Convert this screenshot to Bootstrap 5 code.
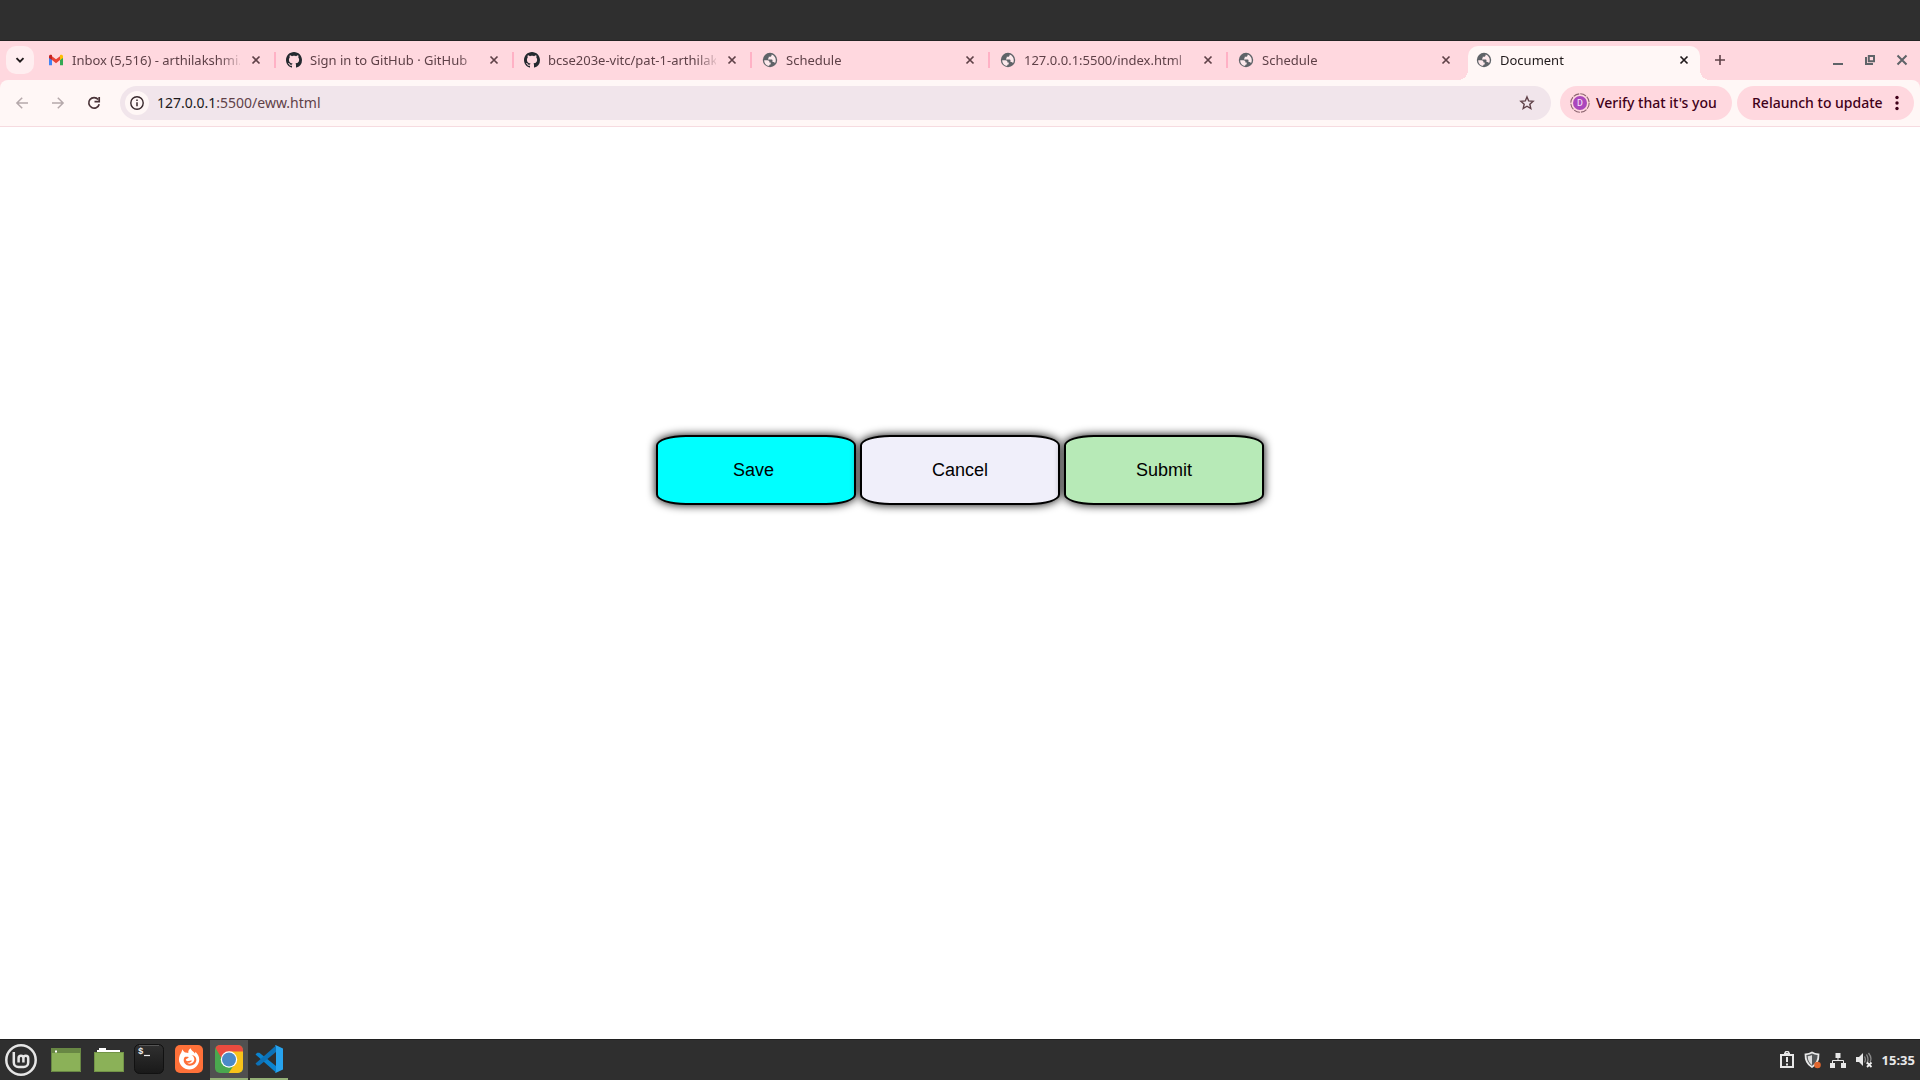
<!DOCTYPE html>
<html lang="en">
<head>
<meta charset="utf-8">
<meta name="viewport" content="width=device-width, initial-scale=1">
<title>Document</title>
<link href="https://cdn.jsdelivr.net/npm/bootstrap@5.3.0/dist/css/bootstrap.min.css" rel="stylesheet">
<style>
  body { font-family: "Noto Sans", "Open Sans", sans-serif; color: #201a1b; background: #fff; }
  svg { display: block; flex: none; }
  button { border: 0; background: none; padding: 0; color: inherit; }
  .top-panel { height: 41px; background: #2f2f2f; border-bottom: 1px solid #232323; }
  .tab-strip { height: 39px; background: #ffd8df; padding: 5px 10px 0 6px; }
  .tab-search { width: 28px; height: 28px; border-radius: 10px; background: #ffeef0; margin-right: 4px; }
  .tab-item { width: 238px; height: 28px; padding: 0 10px 0 10px; position: relative; font-size: 13px; line-height: 20px; color: #5f4148; }
  .tab-item a { color: inherit; }
  .tab-item .divider { position: absolute; right: 0; top: 6px; width: 2px; height: 16px; background: #ffb1c5; }
  .tab-title { width: 168px; margin-left: 8px; overflow: hidden; white-space: nowrap; -webkit-mask-image: linear-gradient(90deg, #000 148px, transparent 172px); mask-image: linear-gradient(90deg, #000 148px, transparent 172px); }
  .tab-close { width: 16px; height: 16px; margin-left: 8px; }
  .tab-current { width: 232px; height: 34px; margin: 0 4px 0 2px; padding: 0 8px 6px; border-radius: 10px 10px 0 0; background: #fff7f6; color: #201a1b; }
  .tab-current::before, .tab-current::after { content: ""; position: absolute; bottom: 0; width: 10px; height: 10px; }
  .tab-current::before { left: -10px; background: radial-gradient(circle at 0 0, transparent 10px, #fff7f6 10px); }
  .tab-current::after { right: -10px; background: radial-gradient(circle at 100% 0, transparent 10px, #fff7f6 10px); }
  .new-tab { width: 32px; height: 28px; color: #5f4148; }
  .win-controls { gap: 16px; height: 28px; color: #5f6368; }
  .toolbar-wrap { background: #ffd8df; }
  .toolbar-bar { height: 47px; padding: 6px 6px 6px 12px; background: #fff7f6; border-radius: 8px 8px 0 0; border-bottom: 1px solid #f6dbe0; }
  .nav-icons { gap: 16px; color: #b5a9ab; margin-right: 16px; }
  .address-box { height: 34px; border-radius: 17px; background: #f1e5eb; padding: 0 16px 0 5px; }
  .site-info { width: 24px; height: 24px; border-radius: 50%; background: #fff7f6; }
  .url-field { position: relative; font-size: 14px; line-height: 20px; margin-left: 8px; }
  .url-rest { color: #5f4148; }
  .url-field input { position: absolute; inset: 0; border: 0; background: transparent; color: transparent; width: 100%; padding: 0; outline: 0; }
  .pill { height: 34px; border-radius: 17px; background: #ffd8df; color: #3f0019; font-size: 14px; font-weight: 500; line-height: 20px; white-space: nowrap; }
  .pill-verify { width: 172px; margin-left: 9px; padding-left: 10px; gap: 6px; }
  .pill-update { width: 177px; margin-left: 5px; padding: 0 12px 0 15px; }
  .page-area { padding-top: 308px; gap: 4px; }
  .form-btn { width: 200px; height: 70px; border: 2px solid #000; border-radius: 15%; box-shadow: 0 0 10px #000; color: #000; font: 18px/20px "Liberation Sans", Arial, sans-serif; }
  .btn-save { background: #0ff; }
  .btn-cancel { background: #f0effa; }
  .btn-submit { background: #b7eab7; }
  .task-panel { height: 41px; background: #2f2f2f; border-top: 1px solid #202020; padding: 0 5px; color: #ececec; }
  .launcher { width: 38px; height: 40px; border-bottom: 2px solid transparent; }
  .launcher.running { border-color: #94b077; }
  .launcher.focused { background: #505050; }
  .apps { gap: 2px; margin-left: 2px; }
  .mint-menu { width: 32px; margin-right: 10px; }
  .folder-gap { gap: 5px; padding-top: 2px; }
  .tray { gap: 9px; }
  .clock { font: bold 13px/20px "Noto Sans", sans-serif; color: #e8e8e8; }
</style>
</head>
<body class="d-flex flex-column min-vh-100">
<svg width="0" height="0" class="position-absolute" aria-hidden="true">
  <defs>
    <symbol id="globe" viewBox="0 0 16 16"><circle cx="8" cy="8" r="7.2" fill="#5f6368"/><path d="M2.2 8.3h3.2c1.300 0 2 .8 2 1.700v.5h1.300v1.500c0 .5-.4.8-.9.8h-.6v1.300C4.500 13.800 2.200 11.500 2.200 8.300zM9.600 2.400v.8c0 .9-.7 1.500-1.500 1.500H6.700v1.200c0 .4-.3.7-.7.7v1h3.500c.6 0 1 .4 1 1v1.500h.8c.8 0 1.400.4 1.700 1.100.5-.9.800-1.900.8-3 0-2.700-1.700-5-4.200-5.800z" fill="#fde9ec"/></symbol>
    <symbol id="octo" viewBox="0 0 16 16"><path fill="#24292f" d="M8 0C3.580 0 0 3.580 0 8c0 3.540 2.290 6.530 5.470 7.590.4.070.55-.17.55-.38 0-.19-.01-.82-.01-1.490-2.010.37-2.530-.49-2.690-.94-.09-.23-.48-.94-.82-1.130-.28-.15-.68-.52-.01-.53.63-.01 1.080.58 1.230.82.72 1.210 1.870.87 2.330.66.07-.52.28-.87.51-1.070-1.780-.2-3.640-.89-3.640-3.950 0-.87.31-1.590.82-2.150-.08-.2-.36-1.020.08-2.120 0 0 .67-.21 2.200.82.64-.18 1.320-.27 2-.27s1.360.09 2 .27c1.530-1.040 2.200-.82 2.200-.82.44 1.100.16 1.920.08 2.120.51.56.82 1.270.82 2.150 0 3.070-1.870 3.750-3.650 3.950.29.25.54.73.54 1.480 0 1.070-.01 1.930-.01 2.200 0 .21.15.46.55.38A8 8 0 0 0 16 8c0-4.420-3.580-8-8-8z"/></symbol>
    <symbol id="cross" viewBox="0 0 16 16"><path d="M4.500 4.500l7 7m0-7l-7 7" stroke="currentColor" stroke-width="1.700" fill="none"/></symbol>
  </defs>
</svg>

<div class="top-panel"></div>

<header>
  <nav class="tab-strip d-flex align-items-start" aria-label="Tabs">
    <button class="tab-search d-flex align-items-center justify-content-center" type="button" aria-label="Search tabs"><svg width="12" height="12" viewBox="0 0 12 12"><path d="M2.500 4.200L6 7.700l3.500-3.500" fill="none" stroke="#201a1b" stroke-width="1.900"/></svg></button>
    <div class="tab-item d-flex align-items-center">
      <svg width="16" height="16" viewBox="0 0 16 16"><path fill="#4285f4" d="M1 4v9.300h3V7.500z"/><path fill="#34a853" d="M15 4v9.300h-3V7.500z"/><path fill="#ea4335" d="M4 4.200l4 3.100 4-3.100v3.900l-4 3.100-4-3.100z"/><path fill="#c5221f" d="M1 4.400C1 2.600 2.900 2.300 4 3.200v4.900L1 5.900z"/><path fill="#fbbc04" d="M15 4.400c0-1.800-1.900-2.100-3-1.200v4.900l3-2.200z"/></svg>
      <a href="#" class="tab-title text-decoration-none">Inbox (5,516) - arthilakshmi.i</a>
      <button class="tab-close" type="button" aria-label="Close tab"><svg width="16" height="16"><use href="#cross"/></svg></button><span class="divider"></span>
    </div>
    <div class="tab-item d-flex align-items-center">
      <svg width="16" height="16"><use href="#octo"/></svg>
      <a href="#" class="tab-title text-decoration-none">Sign in to GitHub · GitHub</a>
      <button class="tab-close" type="button" aria-label="Close tab"><svg width="16" height="16"><use href="#cross"/></svg></button><span class="divider"></span>
    </div>
    <div class="tab-item d-flex align-items-center">
      <svg width="16" height="16"><use href="#octo"/></svg>
      <a href="#" class="tab-title text-decoration-none">bcse203e-vitc/pat-1-arthilak</a>
      <button class="tab-close" type="button" aria-label="Close tab"><svg width="16" height="16"><use href="#cross"/></svg></button><span class="divider"></span>
    </div>
    <div class="tab-item d-flex align-items-center">
      <svg width="16" height="16"><use href="#globe"/></svg>
      <a href="#" class="tab-title text-decoration-none">Schedule</a>
      <button class="tab-close" type="button" aria-label="Close tab"><svg width="16" height="16"><use href="#cross"/></svg></button><span class="divider"></span>
    </div>
    <div class="tab-item d-flex align-items-center">
      <svg width="16" height="16"><use href="#globe"/></svg>
      <a href="#" class="tab-title text-decoration-none">127.0.0.1:5500/index.html</a>
      <button class="tab-close" type="button" aria-label="Close tab"><svg width="16" height="16"><use href="#cross"/></svg></button><span class="divider"></span>
    </div>
    <div class="tab-item d-flex align-items-center">
      <svg width="16" height="16"><use href="#globe"/></svg>
      <a href="#" class="tab-title text-decoration-none">Schedule</a>
      <button class="tab-close" type="button" aria-label="Close tab"><svg width="16" height="16"><use href="#cross"/></svg></button>
    </div>
    <div class="tab-item tab-current d-flex align-items-center">
      <svg width="16" height="16"><use href="#globe"/></svg>
      <a href="#" class="tab-title text-decoration-none" aria-current="page">Document</a>
      <button class="tab-close" type="button" aria-label="Close tab"><svg width="16" height="16"><use href="#cross"/></svg></button>
    </div>
    <button class="new-tab d-flex align-items-center justify-content-center" type="button" aria-label="New tab"><svg width="12" height="12" viewBox="0 0 12 12"><path d="M6 1v10M1 6h10" stroke="currentColor" stroke-width="1.600"/></svg></button>
    <div class="win-controls d-flex align-items-center ms-auto">
      <button type="button" aria-label="Minimize"><svg width="16" height="16" viewBox="0 0 16 16"><path d="M3 12h10" stroke="currentColor" stroke-width="2"/></svg></button>
      <button type="button" aria-label="Restore"><svg width="16" height="16" viewBox="0 0 16 16"><path d="M6.800 4h5.200v5.200H6.800zM4 5v7h7" fill="none" stroke="currentColor" stroke-width="2"/></svg></button>
      <button type="button" aria-label="Close window"><svg width="16" height="16" viewBox="0 0 16 16"><path d="M3.500 3.500l9 9m0-9l-9 9" stroke="currentColor" stroke-width="2"/></svg></button>
    </div>
  </nav>

  <div class="toolbar-wrap">
    <div class="toolbar-bar d-flex align-items-center">
      <div class="nav-icons d-flex">
        <button type="button" aria-label="Back"><svg width="20" height="20" viewBox="0 0 20 20"><path d="M16 10H5m5.200-5.300L4.900 10l5.300 5.300" fill="none" stroke="currentColor" stroke-width="1.500"/></svg></button>
        <button type="button" aria-label="Forward"><svg width="20" height="20" viewBox="0 0 20 20"><path d="M4 10h11M9.800 4.700l5.300 5.300-5.300 5.300" fill="none" stroke="currentColor" stroke-width="1.500"/></svg></button>
        <button type="button" aria-label="Reload"><svg width="20" height="20" viewBox="0 0 20 20"><path d="M14.200 6.500A5.300 5.300 0 1 0 15.200 11.200" fill="none" stroke="#4a3338" stroke-width="1.700"/><path d="M15.200 4v4.700h-4.700" fill="none" stroke="#4a3338" stroke-width="1.700"/></svg></button>
      </div>
      <div class="address-box d-flex align-items-center flex-grow-1">
        <button class="site-info d-flex align-items-center justify-content-center" type="button" aria-label="Site information"><svg width="16" height="16" viewBox="0 0 16 16"><circle cx="8" cy="8" r="6.200" fill="none" stroke="#38282c" stroke-width="1.400"/><path d="M8 7.300v4M8 4.500V6" stroke="#38282c" stroke-width="1.500"/></svg></button>
        <div class="url-field flex-grow-1">127.0.0.1<span class="url-rest">:5500/eww.html</span><input type="text" aria-label="Address"></div>
        <button type="button" aria-label="Bookmark this tab"><svg width="16" height="16" viewBox="0 0 16 16"><path d="M8 1.900l1.700 4 4.400.4-3.300 2.900 1 4.300L8 11.200l-3.800 2.300 1-4.300-3.300-2.900 4.400-.4z" fill="none" stroke="#5f4148" stroke-width="1.400"/></svg></button>
      </div>
      <button class="pill pill-verify d-flex align-items-center" type="button">
        <svg width="20" height="20" viewBox="0 0 20 20"><circle cx="10" cy="10" r="9.200" fill="none" stroke="#8d6570" stroke-width="1.100" stroke-dasharray="6.200 1.020"/><circle cx="10" cy="10" r="7" fill="#ab47bc"/><text x="10" y="13" text-anchor="middle" font-size="8" fill="#f7e6fa">D</text></svg>Verify that it's you
      </button>
      <button class="pill pill-update d-flex align-items-center justify-content-between" type="button">Relaunch to update
        <svg width="10" height="16" viewBox="0 0 10 16"><g fill="currentColor"><circle cx="5" cy="2.500" r="1.700"/><circle cx="5" cy="8" r="1.700"/><circle cx="5" cy="13.500" r="1.700"/></g></svg>
      </button>
    </div>
  </div>
</header>

<main class="page-area d-flex justify-content-center align-items-start flex-grow-1">
  <button class="form-btn btn-save" type="button">Save&nbsp;</button>
  <button class="form-btn btn-cancel" type="button">Cancel</button>
  <button class="form-btn btn-submit" type="submit">Submit</button>
</main>

<footer class="task-panel d-flex align-items-center">
  <button class="mint-menu" type="button" aria-label="Menu"><svg width="32" height="32" viewBox="0 0 32 32"><circle cx="16" cy="16" r="14.700" fill="none" stroke="#e6e6e6" stroke-width="2.500"/><path d="M8.800 8v10.500a4.500 4.500 0 0 0 4.500 4.500h5.400a4.500 4.500 0 0 0 4.500-4.500v-4.300a2.400 2.400 0 0 0-4.800 0v4.300m0-4.300a2.400 2.400 0 0 0-4.800 0v4.300" fill="none" stroke="#e6e6e6" stroke-width="2.500"/></svg></button>
  <div class="folder-gap d-flex">
    <button class="launcher d-flex align-items-center justify-content-center" type="button" aria-label="Show desktop"><svg width="30" height="24" viewBox="0 0 30 24"><path fill="#8bb158" d="M0 0h30v24H0z"/><path fill="#688744" d="M0 0h30v5H0z"/><path d="M.5.500h29v23H.5z" fill="none" stroke="#688744"/><path fill="#fff" d="M4 2.500h2v2H4z"/></svg></button>
    <button class="launcher d-flex align-items-center justify-content-center" type="button" aria-label="Files"><svg width="30" height="26" viewBox="0 0 30 26"><path fill="#fff" d="M3 5V3h2V1h7v2h14v2z"/><rect y="5" width="30" height="20" rx="1" fill="#8bb158"/><path d="M.5 5.500h29v19H.5z" fill="none" stroke="#739447"/></svg></button>
  </div>
  <div class="apps d-flex">
    <button class="launcher d-flex align-items-center justify-content-center" type="button" aria-label="Terminal"><svg width="30" height="30" viewBox="0 0 30 30"><defs><linearGradient id="tg" x2="0" y2="1"><stop stop-color="#303030"/><stop offset="1" stop-color="#191919"/></linearGradient></defs><rect x=".5" y=".5" width="29" height="29" rx="5" fill="url(#tg)" stroke="#111"/><path d="M5 1.500h20" stroke="#555"/><text x="4" y="10" font-size="9" font-family="Liberation Mono, monospace" font-weight="bold" fill="#eee">$</text><path d="M10 11.500h6" stroke="#eee" stroke-width="1.200"/></svg></button>
    <button class="launcher d-flex align-items-center justify-content-center" type="button" aria-label="Firefox"><svg width="30" height="30" viewBox="0 0 30 30"><rect x="1" y="1" width="28" height="28" rx="5" fill="#ff7139"/><path d="M8.500 5.200c.4 1.500 1.300 2.300 2.500 3.200 1.300-.1 2.300.1 3.300.6-.2-2 .6-3.600 2.300-4.700.6 2.300 2.900 3.200 4.300 5.200.3-.5.500-1 .5-1.700 2.300 2.100 3.800 4.600 3.800 7.800 0 5.500-4.400 9.900-9.900 9.900S5 21.100 5 15.600c0-3 1.100-5.200 2.300-7 .3-1 .8-2.200 1.200-3.400z" fill="#fff"/><path d="M10.500 13.200c1.500-.8 3.100-.4 4.300-.1-.6 1.500-2.600 1.400-3.100 2.900.6 1 1.900 1.400 3 1 1.100-.4 2.300-1 3.200-.2-.9 1.700-3 2.300-4.800 1.900 3.400 2.500 7.500-.1 7.200-3.600-.1-2.100-1.400-3.500-3-4.100 3.200.3 5.400 2.600 5 5.500-.4 3-3 5.300-6.600 5.200-4.600-.1-7.500-4.300-5.200-8.500z" fill="#ff7139"/></svg></button>
    <button class="launcher running focused d-flex align-items-center justify-content-center" type="button" aria-label="Chrome"><svg width="30" height="30" viewBox="0 0 30 30"><defs><clipPath id="cc"><rect x="1" y="1" width="28" height="28" rx="5"/></clipPath></defs><g clip-path="url(#cc)"><path fill="#4aa84e" d="M0 0h30v30H0z"/><path fill="#f8c21a" d="M15 7h15v23H14l8-12z"/><path fill="#e94b3f" d="M0 0h30v7.500H15L8 15 1 3z"/></g><circle cx="15" cy="15.500" r="8.200" fill="#fff"/><circle cx="15" cy="15.500" r="7" fill="#4b8ac7"/></svg></button>
    <button class="launcher running d-flex align-items-center justify-content-center" type="button" aria-label="Visual Studio Code"><svg width="28" height="28" viewBox="0 0 28 28"><path d="M.5 9.500l1.700-1.700 2.200 0L21 21v6.500z" fill="#0b84d0"/><path d="M.5 18.500l1.700 1.900 2.200 0L21 7V.5z" fill="#0c72b8"/><path d="M20.500 0L28 3.400v21.200L20.500 28c-1 0 .5-1 .5-2V2c0-1-1.500-2-.5-2z" fill="#27a3ee"/></svg></button>
  </div>
  <div class="tray d-flex align-items-center ms-auto">
    <svg width="16" height="18" viewBox="0 0 16 18"><path d="M2 4h12v12H2zM5 3h6" fill="none" stroke="#e8e8e8" stroke-width="2"/><path d="M6 2.500a2 2 0 0 1 4 0" fill="none" stroke="#e8e8e8" stroke-width="1.500"/><path d="M8 6v5m0 1.500v2" stroke="#e8e8e8" stroke-width="2"/></svg>
    <svg width="17" height="18" viewBox="0 0 17 18"><path d="M8 1.500c2 1.300 4 1.700 6.500 1.800C14.700 9 12.500 13.500 8 16 3.500 13.500 1.300 9 1.500 3.300 4 3.200 6 2.800 8 1.500z" fill="#55585a" stroke="#e8e8e8" stroke-width="1.800"/><path d="M8 4v10C5 12 3.800 9 3.700 5.200 5.500 5.100 6.800 4.700 8 4z" fill="#ddd"/><circle cx="13.500" cy="14" r="3.300" fill="#e2672f"/></svg>
    <svg width="16" height="16" viewBox="0 0 16 16"><path fill="#e8e8e8" d="M5.500 1h5v5h-5zM0 11h5v5H0zM11 11h5v5h-5z"/><path d="M8 6v3M2.500 11V8.500h11V11" fill="none" stroke="#e8e8e8"/></svg>
    <svg width="18" height="18" viewBox="0 0 18 18"><path fill="#e8e8e8" d="M1 6h3l4-4v13l-4-4H1z"/><path d="M9.500 5.500q1.800 3 0 6M11.500 3.500q3 5 0 9.500M13.500 2q4 5 1.500 9" fill="none" stroke="#8a8a8a" stroke-width="1.300"/><path d="M12 11.500l4.500 4.500m0-4.500L12 16" stroke="#f2f2f2" stroke-width="1.800"/></svg>
    <span class="clock">15:35</span>
  </div>
</footer>
<script src="https://cdn.jsdelivr.net/npm/bootstrap@5.3.0/dist/js/bootstrap.bundle.min.js"></script>
</body>
</html>
